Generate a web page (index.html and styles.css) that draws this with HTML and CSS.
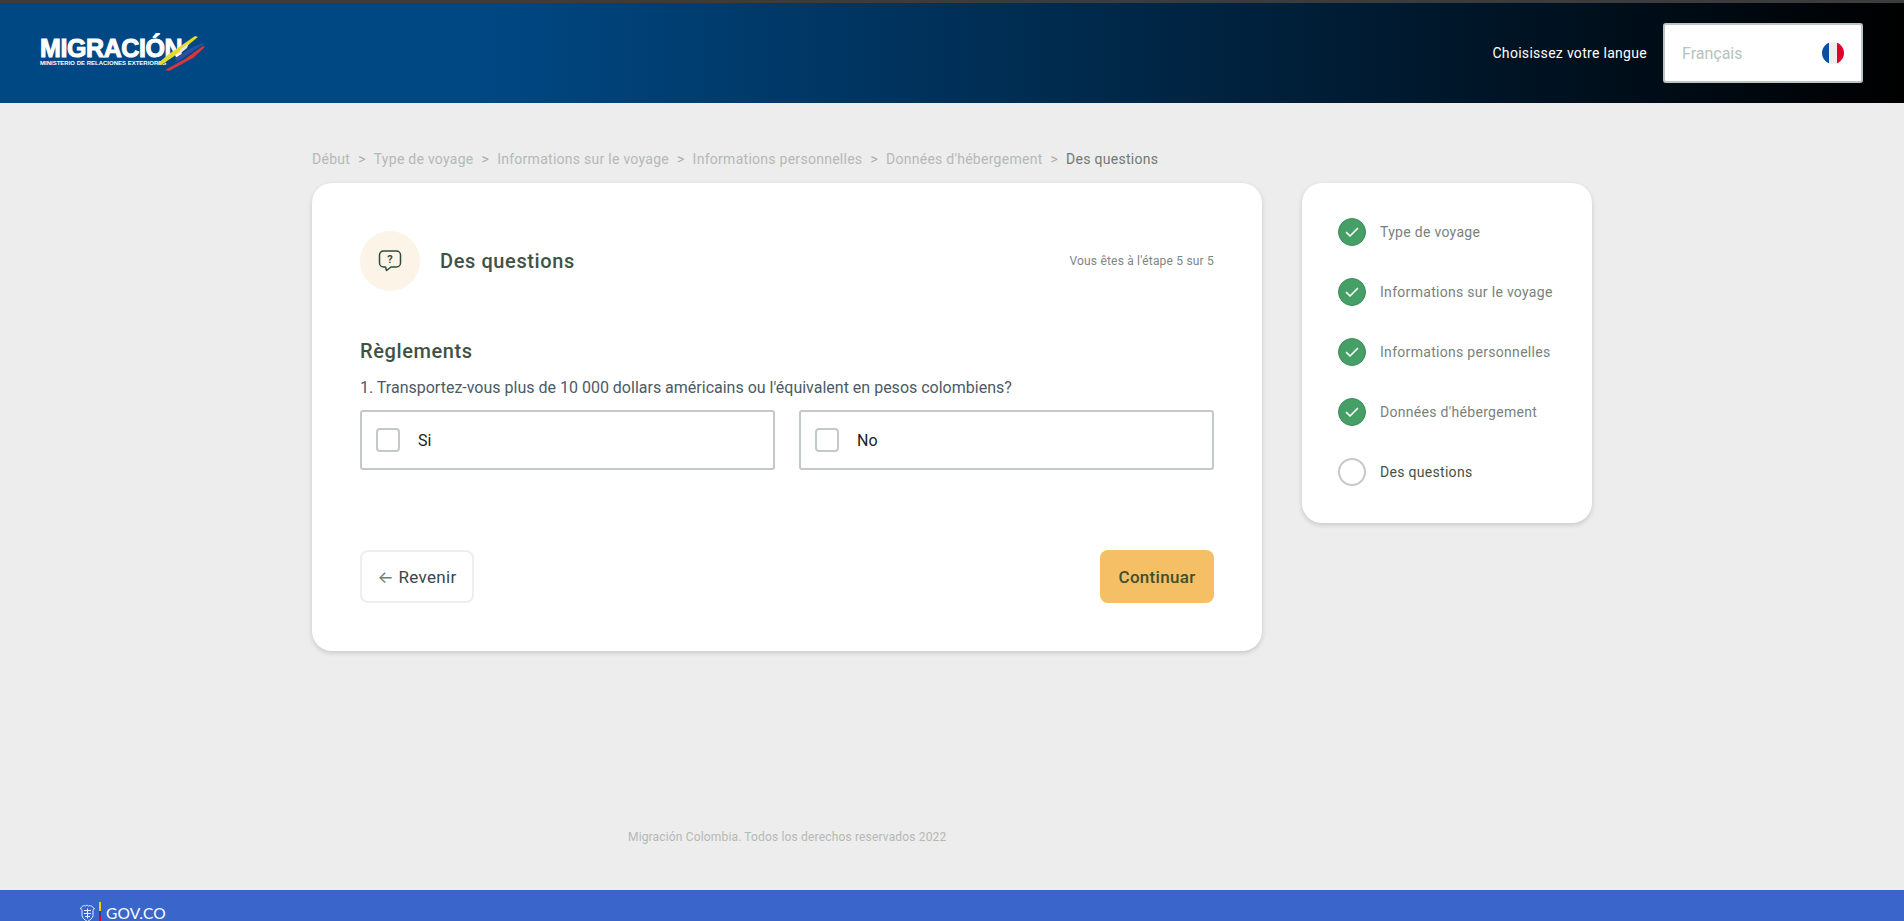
FILE: index.html
```html
<!DOCTYPE html>
<html lang="fr">

<head>
    <meta charset="UTF-8">
    <meta name="viewport" content="width=device-width, initial-scale=1.0">
    <title>Des questions</title>

    <link rel="stylesheet" href="styles.css">
</head>

<body>
    <header class="top-bar">
        <div class="logo">
            <div class="logo-name">MIGRACIÓN</div>
            <div class="logo-sub">MINISTERIO DE RELACIONES EXTERIORES</div>
            <svg class="logo-swoosh" width="50" height="36" viewBox="0 0 50 36">
                <path d="M0 29 L12 19 L38 1 L41 2 L30 11 L16 22 L4 30 Z" fill="#e6d92c"/>
                <path d="M24 14 L32 8 L30 13 L20 21 Z" fill="#e8e8e8"/>
                <path d="M18 23 L34 13 L46 8 L47 9 L36 16 L20 27 Z" fill="#2d4f9e"/>
                <path d="M8 35 L28 24 L46 11 L48 12 L36 23 L12 36 Z" fill="#d9363a"/>
            </svg>
        </div>
        <div class="lang">
            <span class="lang-label">Choisissez votre langue</span>
            <div class="lang-select">
                <span>Français</span>
                <span class="flag"><i class="flag-blue"></i><i class="flag-white"></i><i class="flag-red"></i></span>
            </div>
        </div>
    </header>

    <main class="page">
        <div class="left-col">
            <nav class="crumbs">
                <span>Début</span><b>&gt;</b>
                <span>Type de voyage</span><b>&gt;</b>
                <span>Informations sur le voyage</span><b>&gt;</b>
                <span>Informations personnelles</span><b>&gt;</b>
                <span>Données d'hébergement</span><b>&gt;</b>
                <span class="crumb-current">Des questions</span>
            </nav>

            <section class="card">
                <div class="card-head">
                    <div class="head-icon">
                        <svg width="24" height="24" viewBox="0 0 24 24" fill="none" stroke="#2f4a40" stroke-width="1.5" stroke-linejoin="round">
                            <path d="M5.500 2h13a4 4 0 0 1 4 4v8a4 4 0 0 1-4 4h-5.500l-4.500 3.500-1-3.500h-2a4 4 0 0 1-4-4v-8a4 4 0 0 1 4-4z"/>
                            <text x="12" y="14" class="head-mark">?</text>
                        </svg>
                    </div>
                    <h2>Des questions</h2>
                    <span class="step-count">Vous êtes à l'étape 5 sur 5</span>
                </div>

                <h3>Règlements</h3>
                <p class="question">1. Transportez-vous plus de 10 000 dollars américains ou l'équivalent en pesos colombiens?</p>

                <div class="options">
                    <label class="option"><span class="box"></span>Si</label>
                    <label class="option"><span class="box"></span>No</label>
                </div>

                <div class="actions">
                    <button class="btn-back"><span class="arrow">←</span> Revenir</button>
                    <button class="btn-next">Continuar</button>
                </div>
            </section>

            <p class="copy">Migración Colombia. Todos los derechos reservados 2022</p>
        </div>

        <aside class="steps">
            <div class="step done"><span class="dot"><svg width="14" height="14" viewBox="0 0 14 14" fill="none" stroke="#fff" stroke-width="1.700" stroke-linecap="round" stroke-linejoin="round"><path d="M1.500 7.500l3.500 3.500 7.500-7.500"/></svg></span>Type de voyage</div>
            <div class="step done"><span class="dot"><svg width="14" height="14" viewBox="0 0 14 14" fill="none" stroke="#fff" stroke-width="1.700" stroke-linecap="round" stroke-linejoin="round"><path d="M1.500 7.500l3.500 3.500 7.500-7.500"/></svg></span>Informations sur le voyage</div>
            <div class="step done"><span class="dot"><svg width="14" height="14" viewBox="0 0 14 14" fill="none" stroke="#fff" stroke-width="1.700" stroke-linecap="round" stroke-linejoin="round"><path d="M1.500 7.500l3.500 3.500 7.500-7.500"/></svg></span>Informations personnelles</div>
            <div class="step done"><span class="dot"><svg width="14" height="14" viewBox="0 0 14 14" fill="none" stroke="#fff" stroke-width="1.700" stroke-linecap="round" stroke-linejoin="round"><path d="M1.500 7.500l3.500 3.500 7.500-7.500"/></svg></span>Données d'hébergement</div>
            <div class="step current"><span class="dot"></span>Des questions</div>
        </aside>
    </main>

    <footer class="gov-bar">
        <svg class="crest" width="15" height="18" viewBox="0 0 15 18" fill="none" stroke="#e8eefb" stroke-width="1">
            <path d="M0.500 5c1-3 3.500-4 5-3 .8-1 2.200-1 3 0 1.500-1 4-.0 6 3-1 0-1.500.5-1.500 1.500v5c0 2.500-3 4.500-5.500 6-2.500-1.500-5.500-3.500-5.500-6v-5c0-1-.5-1.500-1.500-1.500z"/>
            <path d="M4 6.500h7M4 9.500h7M5 12.500h5M7.500 4.500v10"/>
        </svg>
        <span class="gov-flag"></span>
        <span class="gov-name">GOV.CO</span>
    </footer>
</body>

</html>
```

FILE: styles.css
```css
* {
    box-sizing: border-box;
}

html,
body {
    height: 100%;
}

body {
    margin: 0;
    display: flex;
    flex-direction: column;
    overflow: hidden;
    background-color: #ededed;
    font-family: "Roboto", "Inter", sans-serif;
    color: #3f5245;
}

.top-bar {
    height: 103px;
    flex-shrink: 0;
    border-top: 3px solid #3c3c3c;
    padding: 0 40px;
    display: flex;
    align-items: center;
    justify-content: space-between;
    background: linear-gradient(90deg, #004884 0%, #004884 25%, #000 100%);
}

.logo {
    position: relative;
    width: 170px;
    color: #fff;
    margin-top: -4px;
}

.logo-name {
    font-family: "Liberation Sans", sans-serif;
    font-weight: 700;
    font-size: 25px;
    line-height: 24px;
    letter-spacing: -0.4px;
    -webkit-text-stroke: 1px #fff;
}

.logo-sub {
    font-family: "Liberation Sans", sans-serif;
    font-weight: 700;
    font-size: 6px;
    line-height: 7px;
    white-space: nowrap;
}

.logo-swoosh {
    position: absolute;
    left: 117px;
    top: -1px;
}

.lang {
    display: flex;
    align-items: center;
    gap: 16px;
    margin-right: 1px;
}

.lang-label {
    color: #fff;
    font-size: 14px;
    letter-spacing: 0.3px;
}

.lang-select {
    width: 200px;
    height: 60px;
    padding: 0 17px;
    display: flex;
    align-items: center;
    justify-content: space-between;
    background-color: #fff;
    border: 2px solid #bcc5c0;
    border-radius: 3px;
    font-size: 16px;
    color: #b8c2bd;
}

.flag {
    width: 22px;
    height: 22px;
    border-radius: 50%;
    overflow: hidden;
    display: flex;
}

.flag i {
    flex: 1;
}

.flag-blue {
    background-color: #0b4ea2;
}

.flag-white {
    background-color: #eeeeee;
}

.flag-red {
    background-color: #e4002b;
}

.page {
    flex: 1;
    display: flex;
    align-items: flex-start;
    gap: 40px;
    padding: 47px 0 0 312px;
}

.left-col {
    width: 950px;
}

.crumbs {
    height: 33px;
    display: flex;
    gap: 8px;
    font-size: 14px;
    line-height: 18px;
    letter-spacing: 0.27px;
    color: #b4b9b6;
    white-space: nowrap;
}

.crumbs b {
    font-weight: 400;
    color: #a8aeab;
}

.crumb-current {
    color: #6f7a73;
}

.card {
    height: 468px;
    padding: 48px 48px 0;
    background-color: #fff;
    border-radius: 20px;
    box-shadow: 0 2px 5px rgba(0, 0, 0, 0.16);
}

.card-head {
    display: flex;
    align-items: center;
    gap: 20px;
}

.head-icon {
    width: 60px;
    height: 60px;
    border-radius: 50%;
    background-color: #fdf4e8;
    display: flex;
    align-items: center;
    justify-content: center;
}

.head-mark {
    fill: #2f4a40;
    stroke: none;
    font-size: 11px;
    font-weight: 700;
    text-anchor: middle;
}

.card-head h2 {
    margin: 0;
    font-size: 20px;
    font-weight: 500;
    letter-spacing: 0.6px;
    flex: 1;
}

.step-count {
    font-size: 12px;
    letter-spacing: 0.2px;
    color: #7d8681;
}

h3 {
    margin: 48px 0 0;
    font-size: 20px;
    line-height: 24px;
    font-weight: 500;
    letter-spacing: 0.6px;
}

.question {
    margin: 15px 0 0;
    font-size: 16px;
    line-height: 20px;
    color: #4c5a66;
}

.options {
    display: grid;
    grid-template-columns: 1fr 1fr;
    gap: 24px;
    margin-top: 12px;
}

.option {
    height: 60px;
    padding: 0 14px;
    display: flex;
    align-items: center;
    gap: 18px;
    border: 2px solid #c3cac5;
    border-radius: 3px;
    font-size: 16px;
    color: #222;
}

.box {
    width: 24px;
    height: 24px;
    border: 2px solid #c3cac5;
    border-radius: 4px;
}

.actions {
    display: flex;
    justify-content: space-between;
    margin-top: 80px;
}

.actions button {
    height: 53px;
    width: 114px;
    font-family: inherit;
    font-size: 17px;
    letter-spacing: 0.3px;
    border-radius: 8px;
    cursor: pointer;
}

.btn-back {
    background-color: #fff;
    border: 2px solid #eeeeee;
    color: #37474a;
}

.arrow {
    color: #6f7f72;
}

.btn-next {
    background-color: #f4bf65;
    border: none;
    font-weight: 500;
    color: #3f4f2c;
}

.copy {
    margin: 178px 0 0 316px;
    font-size: 12px;
    line-height: 16px;
    letter-spacing: 0.16px;
    color: #b4b9b6;
}

.steps {
    width: 290px;
    height: 340px;
    margin-top: 33px;
    padding: 35px 36px 0;
    background-color: #fff;
    border-radius: 20px;
    box-shadow: 0 2px 5px rgba(0, 0, 0, 0.16);
}

.step {
    height: 28px;
    margin-bottom: 32px;
    display: flex;
    align-items: center;
    gap: 14px;
    font-size: 14px;
    letter-spacing: 0.3px;
    color: #77827c;
    white-space: nowrap;
}

.dot {
    width: 28px;
    height: 28px;
    flex-shrink: 0;
    border-radius: 50%;
    display: flex;
    align-items: center;
    justify-content: center;
}

.done .dot {
    background-color: #459f67;
    border: 1px solid #3d8c5b;
}

.current {
    color: #3f5245;
}

.current .dot {
    border: 2px solid #c3cac5;
}

.gov-bar {
    height: 31px;
    flex-shrink: 0;
    padding: 12px 0 0 80px;
    display: flex;
    align-items: flex-start;
    background-color: #3a66cb;
    overflow: hidden;
}

.crest {
    flex-shrink: 0;
    margin-top: 2px;
}

.gov-flag {
    width: 2px;
    height: 19px;
    margin: 0 5px 0 4px;
    flex-shrink: 0;
    background: linear-gradient(#f8d000 50%, #0b4ea2 50%, #0b4ea2 75%, #e4002b 75%);
}

.gov-name {
    color: #fff;
    font-family: "Lato", sans-serif;
    font-size: 15.5px;
    line-height: 22px;
    letter-spacing: 0.2px;
}
```
